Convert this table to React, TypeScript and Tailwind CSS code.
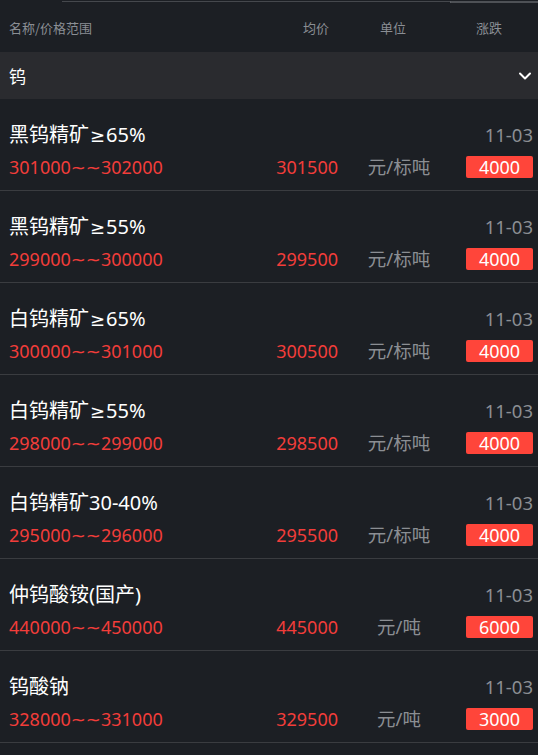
import React from "react";

type Row = { name: string; lo: string; hi: string; avg: string; unit: string; chg: string };

const rows: Row[] = [
  { name: "黑钨精矿≥65%", lo: "301000", hi: "302000", avg: "301500", unit: "元/标吨", chg: "4000" },
  { name: "黑钨精矿≥55%", lo: "299000", hi: "300000", avg: "299500", unit: "元/标吨", chg: "4000" },
  { name: "白钨精矿≥65%", lo: "300000", hi: "301000", avg: "300500", unit: "元/标吨", chg: "4000" },
  { name: "白钨精矿≥55%", lo: "298000", hi: "299000", avg: "298500", unit: "元/标吨", chg: "4000" },
  { name: "白钨精矿30-40%", lo: "295000", hi: "296000", avg: "295500", unit: "元/标吨", chg: "4000" },
  { name: "仲钨酸铵(国产)", lo: "440000", hi: "450000", avg: "445000", unit: "元/吨", chg: "6000" },
  { name: "钨酸钠", lo: "328000", hi: "331000", avg: "329500", unit: "元/吨", chg: "3000" },
];

const font = { fontFamily: '"Noto Sans", "Noto Sans CJK SC", sans-serif' };
const cjk = { fontFamily: '"Noto Sans CJK SC", sans-serif' };
const sym = { fontFamily: '"DejaVu Sans", sans-serif' };

function Name({ text }: { text: string }) {
  const parts = text.split("≥");
  if (parts.length === 1) return <>{text}</>;
  return (
    <>
      {parts[0]}
      <span className="px-[1px] text-[18px]" style={sym}>≥</span>
      {parts[1]}
    </>
  );
}

export default function App() {
  return (
    <div className="w-[538px] h-[755px] overflow-hidden bg-[#1c1f24]" style={font}>
      <div className="flex h-[3px] pt-[1px]">
        <div className="w-[62px]" />
        <div className="w-[388px] h-[1px] bg-[#45484d]" />
        <div className="w-[1px] h-[2px] bg-[#5a5d62]" />
        <div className="flex-1 h-[2px] bg-[#4e5156]" />
      </div>
      <div className="flex items-center h-[49px] pl-[9px] text-[13px] leading-[20px] text-[#8a8e94]" style={cjk}>
        <div className="flex-1 pt-[1px]">名称/价格范围</div>
        <div className="pt-[1px]">均价</div>
        <div className="w-[147px] pl-[51px] pt-[1px]">单位</div>
        <div className="w-[62px] pt-[1px]">涨跌</div>
      </div>
      <div className="flex items-center justify-between h-[47px] bg-[#2a2b2f] pl-[9px] pr-[6px]">
        <span className="text-[17px] leading-[24px] text-white" style={cjk}>钨</span>
        <svg width="14" height="10" viewBox="0 0 14 10" fill="none">
          <path d="M2 2.5 L7 7.5 L12 2.5" stroke="#ffffff" strokeWidth="2" strokeLinecap="round" strokeLinejoin="round" />
        </svg>
      </div>
      {rows.map((r) => (
        <div key={r.name} className="h-[92px] border-b border-[#3a3c40] px-[9px] pr-[5px] pt-[24px]">
          <div className="flex items-center justify-between h-[24px]">
            <span className="text-[20px] leading-[24px] text-white"><Name text={r.name} /></span>
            <span className="text-[18.5px] leading-[24px] text-[#8b8e93]">11-03</span>
          </div>
          <div className="flex items-center h-[24px] mt-[8px]">
            <span className="flex-1 text-[18px] leading-[24px] text-[#f23d3a]">
              {r.lo}
              <span style={sym}>~~</span>
              {r.hi}
            </span>
            <span className="text-[18px] leading-[24px] text-[#f23d3a]">{r.avg}</span>
            <span className="w-[128px] pr-[6px] text-center text-[18.5px] leading-[24px] text-[#8b8e93]">{r.unit}</span>
            <span className="w-[67px] h-[22px] rounded-[2px] bg-[#ff453a] text-white text-[18px] leading-[22px] text-center">{r.chg}</span>
          </div>
        </div>
      ))}
    </div>
  );
}
